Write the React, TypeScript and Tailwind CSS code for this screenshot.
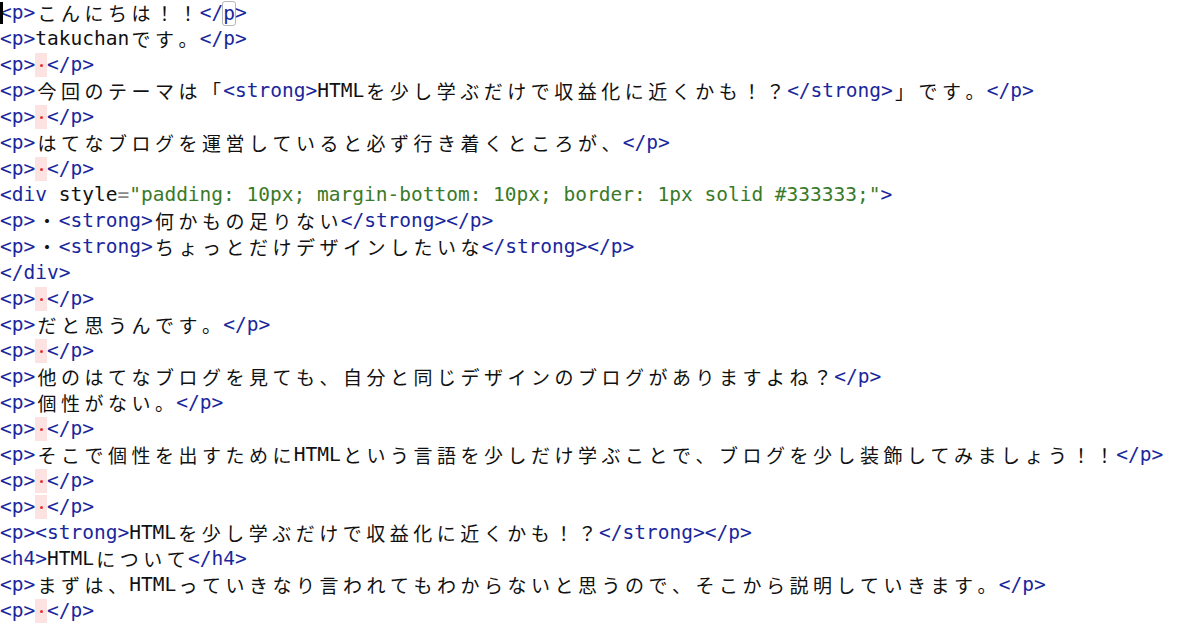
import React from "react";

type Tok = [string, string];

const lines: Tok[][] = [
  [["tag", "<p>"], ["txt", "こんにちは！！"], ["tag", "</"], ["hl", "p"], ["tag", ">"]],
  [["tag", "<p>"], ["txt", "takuchanです。"], ["tag", "</p>"]],
  [["tag", "<p>"], ["nb", ""], ["tag", "</p>"]],
  [["tag", "<p>"], ["txt", "今回のテーマは「"], ["tag", "<strong>"], ["txt", "HTMLを少し学ぶだけで収益化に近くかも！？"], ["tag", "</strong>"], ["txt", "」です。"], ["tag", "</p>"]],
  [["tag", "<p>"], ["nb", ""], ["tag", "</p>"]],
  [["tag", "<p>"], ["txt", "はてなブログを運営していると必ず行き着くところが、"], ["tag", "</p>"]],
  [["tag", "<p>"], ["nb", ""], ["tag", "</p>"]],
  [["tag", "<div"], ["txt", " style"], ["eq", "="], ["str", "\"padding: 10px; margin-bottom: 10px; border: 1px solid #333333;\""], ["tag", ">"]],
  [["tag", "<p>"], ["txt", "・"], ["tag", "<strong>"], ["txt", "何かもの足りない"], ["tag", "</strong></p>"]],
  [["tag", "<p>"], ["txt", "・"], ["tag", "<strong>"], ["txt", "ちょっとだけデザインしたいな"], ["tag", "</strong></p>"]],
  [["tag", "</div>"]],
  [["tag", "<p>"], ["nb", ""], ["tag", "</p>"]],
  [["tag", "<p>"], ["txt", "だと思うんです。"], ["tag", "</p>"]],
  [["tag", "<p>"], ["nb", ""], ["tag", "</p>"]],
  [["tag", "<p>"], ["txt", "他のはてなブログを見ても、自分と同じデザインのブログがありますよね？"], ["tag", "</p>"]],
  [["tag", "<p>"], ["txt", "個性がない。"], ["tag", "</p>"]],
  [["tag", "<p>"], ["nb", ""], ["tag", "</p>"]],
  [["tag", "<p>"], ["txt", "そこで個性を出すためにHTMLという言語を少しだけ学ぶことで、ブログを少し装飾してみましょう！！"], ["tag", "</p>"]],
  [["tag", "<p>"], ["nb", ""], ["tag", "</p>"]],
  [["tag", "<p>"], ["nb", ""], ["tag", "</p>"]],
  [["tag", "<p><strong>"], ["txt", "HTMLを少し学ぶだけで収益化に近くかも！？"], ["tag", "</strong></p>"]],
  [["tag", "<h4>"], ["txt", "HTMLについて"], ["tag", "</h4>"]],
  [["tag", "<p>"], ["txt", "まずは、HTMLっていきなり言われてもわからないと思うので、そこから説明していきます。"], ["tag", "</p>"]],
  [["tag", "<p>"], ["nb", ""], ["tag", "</p>"]],
];

const isWide = (ch: string) => (ch.codePointAt(0) ?? 0) >= 0x2e80;

function Text({ s }: { s: string }) {
  // ascii runs stay in the mono font, full-width chars take 2 columns
  const parts: { wide: boolean; v: string }[] = [];
  for (const ch of Array.from(s)) {
    const w = isWide(ch);
    const last = parts[parts.length - 1];
    if (!w && last && !last.wide) last.v += ch;
    else parts.push({ wide: w, v: ch });
  }
  return (
    <>
      {parts.map((p, i) =>
        p.wide ? (
          <span
            key={i}
            className="inline-flex justify-center w-[23.5px] text-[19px] leading-[26px] text-[#111] font-['Noto_Sans_CJK_JP',sans-serif]"
          >
            {p.v}
          </span>
        ) : (
          <span key={i} className="text-[#111]">{p.v}</span>
        )
      )}
    </>
  );
}

function Line({ toks }: { toks: Tok[] }) {
  return (
    <div className="flex items-center h-[26px] leading-[26px] whitespace-pre">
      {toks.map(([k, v], i) => {
        if (k === "tag") return <span key={i} className="text-[#1a279c]">{v}</span>;
        if (k === "eq") return <span key={i} className="text-[#8a8a8a]">{v}</span>;
        if (k === "str") return <span key={i} className="text-[#3a7a28]">{v}</span>;
        if (k === "hl")
          return (
            <span key={i} className="text-[#1a279c] h-[25px] leading-[23px] flex items-center border border-[#b8b8b8] rounded-[3px] -mx-px">
              {v}
            </span>
          );
        if (k === "nb")
          return (
            <span key={i} className="flex items-center justify-center w-[11.75px] h-[24px] bg-[#fde2e2]">
              <span className="w-[3px] h-[3px] rounded-full bg-[#e8302c]" />
            </span>
          );
        return <Text key={i} s={v} />;
      })}
    </div>
  );
}

export default function App() {
  return (
    <div className="w-[1200px] h-[627px] overflow-hidden bg-white font-['DejaVu_Sans_Mono','Liberation_Mono',monospace] text-[19.5px]">
      <div className="relative">
        <span className="absolute left-0 top-[2px] w-[3px] h-[22px] bg-black" />
        {lines.map((l, i) => (
          <Line key={i} toks={l} />
        ))}
      </div>
    </div>
  );
}
